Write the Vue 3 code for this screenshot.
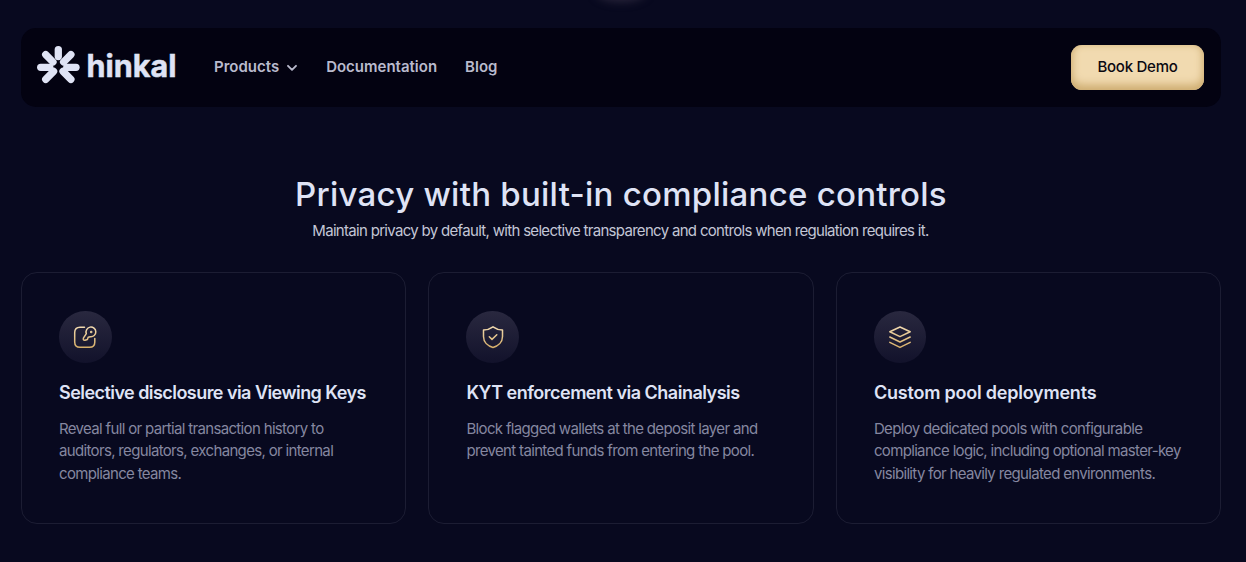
<script setup>
import { ref } from 'vue'

const links = ref([
  { label: 'Products', menu: true },
  { label: 'Documentation', menu: false },
  { label: 'Blog', menu: false },
])

// tracking: letter-spacing of the card title
const cards = [
  {
    icon: 'key',
    title: 'Selective disclosure via Viewing Keys',
    tracking: '-0.55px',
    lines: [
      'Reveal full or partial transaction history to',
      'auditors, regulators, exchanges, or internal',
      'compliance teams.',
    ],
  },
  {
    icon: 'shield',
    title: 'KYT enforcement via Chainalysis',
    tracking: '-0.5px',
    lines: [
      'Block flagged wallets at the deposit layer and',
      'prevent tainted funds from entering the pool.',
    ],
  },
  {
    icon: 'layers',
    title: 'Custom pool deployments',
    tracking: '-0.22px',
    lines: [
      'Deploy dedicated pools with configurable',
      'compliance logic, including optional master-key',
      'visibility for heavily regulated environments.',
    ],
  },
]
</script>

<template>
  <main class="page">
    <div class="glow"></div>

    <header class="navbar">
      <svg class="logo" width="146" height="48" viewBox="0 0 146 48">
        <g class="petals">
          <path d="M22.3 7.6V14.5" />
          <path d="M9.7 12.7L17 20" />
          <path d="M34.9 12.7L27.6 20" />
          <path d="M4.7 25.3H13.8" />
          <path d="M40 25.3H30.8" />
          <path d="M9.7 37.3L17.6 29.4" />
          <path d="M34.9 37.3L27 29.4" />
        </g>
        <text class="wordmark" x="50.5" y="35" textLength="90" lengthAdjust="spacingAndGlyphs">hinkal</text>
      </svg>

      <nav class="links">
        <a v-for="link in links" :key="link.label" class="link">
          {{ link.label }}
          <svg v-if="link.menu" class="chevron" width="12" height="8" viewBox="0 0 12 8">
            <path d="M2 1.8L6 5.8L10 1.8" />
          </svg>
        </a>
      </nav>

      <button type="button" class="demo-button">Book Demo</button>
    </header>

    <section class="intro">
      <h1>Privacy with built-in compliance controls</h1>
      <p>Maintain privacy by default, with selective transparency and controls when regulation requires it.</p>
    </section>

    <section class="cards">
      <article v-for="card in cards" :key="card.icon" class="card">
        <div class="badge">
          <svg width="26" height="26" viewBox="0 0 26 26">
            <defs>
              <linearGradient :id="`gold-${card.icon}`" gradientUnits="userSpaceOnUse" x1="0" y1="2" x2="0" y2="24">
                <stop offset="0" stop-color="#f3dcb2" />
                <stop offset="1" stop-color="#d6ae68" />
              </linearGradient>
            </defs>
            <g :stroke="`url(#gold-${card.icon})`" class="strokes">
              <template v-if="card.icon === 'key'">
                <path d="M12.5 3.2H8Q2.7 3.2 2.7 8.5V18Q2.7 23.3 8 23.3H17.5Q22.8 23.3 22.8 18V14.5" />
                <path d="M14.3 9.6A4.9 4.9 0 1 1 18.3 12.8L16.2 13.3L15.4 15.5L13 16.2Q10.8 16.6 11.4 14.2Z" />
                <circle cx="19.2" cy="8" r=".5" />
              </template>
              <template v-else-if="card.icon === 'shield'">
                <path d="M13 2.8Q17.5 6 22.5 6V12.5C22.5 18 18.3 22 13 23.4C7.7 22 3.5 18 3.5 12.5V6Q8.5 6 13 2.8Z" />
                <path d="M9.3 12.7L12 15.4L16.8 10.7" />
              </template>
              <template v-else>
                <path d="M13 3L23.2 7.8L13 12.6L2.8 7.8Z" />
                <path d="M2.8 13L13 18L23.2 13" />
                <path d="M2.8 18.3L13 23.4L23.2 18.3" />
              </template>
            </g>
          </svg>
        </div>
        <h2 :style="{ letterSpacing: card.tracking }">{{ card.title }}</h2>
        <p>
          <span v-for="line in card.lines" :key="line">{{ line }}</span>
        </p>
      </article>
    </section>
  </main>
</template>

<style>
body {
  margin: 0;
  background: #08091f;
}
</style>

<style scoped>
.page {
  position: relative;
  box-sizing: border-box;
  height: 562px;
  padding: 28px 25px 0 21px;
  overflow: hidden;
  background: #08091f;
  color: #dfe3f5;
  font-family: Inter, 'Liberation Sans', sans-serif;
}
.glow {
  position: absolute;
  top: -18px;
  left: 596px;
  width: 50px;
  height: 20px;
  border-radius: 50%;
  background: #28243a;
  filter: blur(4px);
}
.navbar {
  display: flex;
  align-items: center;
  box-sizing: border-box;
  height: 79px;
  padding: 0 17px 0 15px;
  border-radius: 15px;
  background: #030211;
}
.logo {
  margin-top: -3px;
  overflow: visible;
}
.petals path {
  fill: none;
  stroke: #dfe3f5;
  stroke-width: 7.3;
  stroke-linecap: round;
}
.wordmark {
  fill: #dfe3f5;
  stroke: #dfe3f5;
  stroke-width: 0.5;
  font-size: 31px;
  font-weight: 700;
}
.links {
  display: flex;
  gap: 28px;
  margin: -2px 0 0 32px;
}
.link {
  display: flex;
  align-items: center;
  gap: 7px;
  color: #b9bacd;
  font-size: 15px;
  font-weight: 600;
  line-height: 20px;
}
.chevron {
  margin-top: 2px;
}
.chevron path {
  fill: none;
  stroke: #b9bacd;
  stroke-width: 1.9;
  stroke-linecap: round;
  stroke-linejoin: round;
}
.demo-button {
  width: 133px;
  height: 45px;
  margin-left: auto;
  padding: 0 0 2px;
  border: 0;
  border-radius: 11px;
  background: #f1dab0;
  box-shadow: inset 0 -5px 10px #cfae72, inset 0 0 7px #dabd8a;
  color: #0b0910;
  font: 500 15px Inter, 'Liberation Sans', sans-serif;
  letter-spacing: -0.25px;
}
.intro {
  margin-top: 66px;
  text-align: center;
}
.intro h1 {
  margin: 0;
  font-size: 33px;
  font-weight: 500;
  line-height: 42px;
  letter-spacing: 0.25px;
}
.intro p {
  margin: 5px 0 0 -1px;
  color: #c3c6d6;
  font-size: 15px;
  line-height: 22px;
  letter-spacing: -0.69px;
}
.cards {
  display: grid;
  grid-template-columns: repeat(3, 1fr);
  gap: 22.4px;
  margin-top: 30px;
}
.card {
  box-sizing: border-box;
  height: 252px;
  padding: 38px 0 0 37px;
  border: 1px solid #1c1d33;
  border-radius: 16px;
}
.badge {
  display: flex;
  align-items: center;
  justify-content: center;
  box-sizing: border-box;
  width: 52.5px;
  height: 52px;
  border-radius: 50%;
  background: linear-gradient(#29283f, #12122b);
}
.strokes {
  fill: none;
  stroke-width: 1.5;
  stroke-linecap: round;
  stroke-linejoin: round;
}
.card h2 {
  margin: 17px 0 0;
  font-size: 18px;
  font-weight: 600;
  line-height: 26px;
  white-space: nowrap;
}
.card p {
  margin: 11.8px 0 0;
  color: #8587a0;
  font-size: 15px;
  line-height: 22.5px;
  letter-spacing: -0.66px;
  white-space: nowrap;
}
.card span {
  display: block;
}
</style>
